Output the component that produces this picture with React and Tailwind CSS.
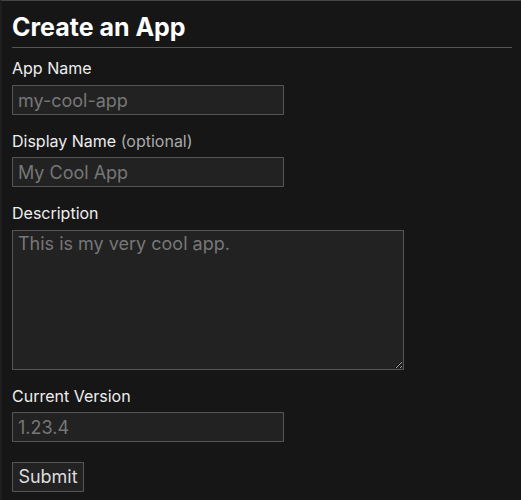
import { useState } from "react";

const fieldClass =
  "block h-[30px] w-[272px] border border-[#555] bg-[#222] px-[5px] text-[18px] leading-[28px] text-[#ddd] outline-none placeholder:text-[#777]";

export default function App() {
  const [form, setForm] = useState({ name: "", displayName: "", description: "", version: "" });

  const update = (key) => (e) => setForm({ ...form, [key]: e.target.value });

  return (
    <div className="min-h-screen border-t border-l-2 border-t-[#454545] border-l-[#1e1e1e] bg-[#161616] pt-[10px] pr-[9px] pl-[10px] text-[#eee] [color-scheme:dark] [font-family:Inter,'Noto_Sans',sans-serif]">
      <h1 className="text-[25px] leading-[32px] font-bold text-white">Create an App</h1>
      <hr className="mt-[4px] border-0 border-t border-[#555]" />

      <form onSubmit={(e) => e.preventDefault()}>
        <label className="mt-[8px] block text-[16px] leading-[24px]">App Name</label>
        <input
          className={`${fieldClass} mt-[5px]`}
          placeholder="my-cool-app"
          value={form.name}
          onChange={update("name")}
        />

        <label className="mt-[14px] block text-[16px] leading-[24px]">
          Display Name <span className="text-[#aaa]">(optional)</span>
        </label>
        <input
          className={`${fieldClass} mt-[4px]`}
          placeholder="My Cool App"
          value={form.displayName}
          onChange={update("displayName")}
        />

        <label className="mt-[14px] block text-[16px] leading-[24px]">Description</label>
        <textarea
          className="mt-[5px] block h-[140px] w-[392px] border border-[#555] bg-[#222] px-[5px] pt-0 text-[18px] leading-[26px] text-[#ddd] outline-none placeholder:text-[#777]"
          placeholder="This is my very cool app."
          value={form.description}
          onChange={update("description")}
        />

        <label className="mt-[14px] block text-[16px] leading-[24px]">Current Version</label>
        <input
          className={`${fieldClass} mt-[4px]`}
          placeholder="1.23.4"
          value={form.version}
          onChange={update("version")}
        />

        <button
          type="submit"
          className="mt-[20px] block h-[30px] w-[72px] border border-[#555] bg-[#222] text-[18px] leading-[28px] text-[#ddd]"
        >
          Submit
        </button>
      </form>
    </div>
  );
}
